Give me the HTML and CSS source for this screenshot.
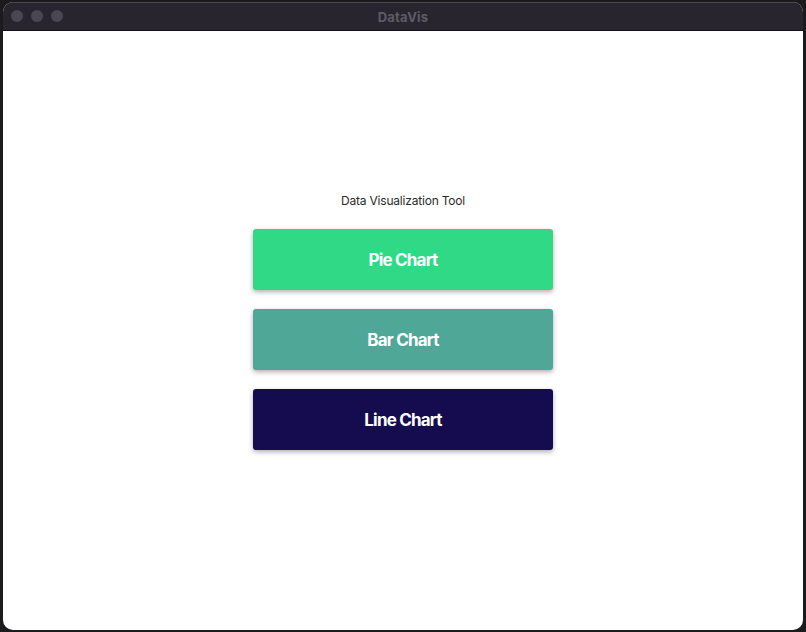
FILE: index.html
```html
<!DOCTYPE html>
<html>
<head>
<meta charset="utf-8">
<title>DataVis</title>
<link rel="stylesheet" href="styles.css">
</head>
<body>
<div class="window">
  <div class="titlebar">
    <div class="lights">
      <span class="light"></span>
      <span class="light"></span>
      <span class="light"></span>
    </div>
    <div class="title">DataVis</div>
  </div>
  <div class="content">
    <div class="panel">
      <div class="heading">Data Visualization Tool</div>
      <button class="btn btn-pie">Pie Chart</button>
      <button class="btn btn-bar">Bar Chart</button>
      <button class="btn btn-line">Line Chart</button>
    </div>
  </div>
</div>
</body>
</html>
```
FILE: styles.css
```css
* { box-sizing: border-box; }
html, body { margin: 0; padding: 0; }
body {
  width: 806px;
  height: 632px;
  background: #1b1b1d;
  padding: 2px 3px 2px 3px;
  font-family: Inter, "Noto Sans", sans-serif;
  overflow: hidden;
}
.window {
  width: 800px;
  height: 628px;
  border-radius: 10px;
  overflow: hidden;
  display: flex;
  flex-direction: column;
  background: #ffffff;
}
.titlebar {
  height: 29px;
  flex: none;
  background: #28252f;
  border-top: 1px solid #4a4750;
  border-bottom: 1px solid #111;
  position: relative;
  display: flex;
  align-items: center;
  justify-content: center;
}
.lights {
  position: absolute;
  left: 8px;
  top: 7px;
  display: flex;
  gap: 8px;
}
.light {
  width: 12px;
  height: 12px;
  border-radius: 50%;
  background: #4a4752;
}
.title {
  color: #5e5b66;
  font-weight: 700;
  font-size: 13px;
  letter-spacing: 0.2px;
}
.content {
  flex: 1;
  display: flex;
  justify-content: center;
  padding-top: 162px;
}
.panel {
  width: 300px;
  display: flex;
  flex-direction: column;
  align-items: stretch;
}
.heading {
  text-align: center;
  font-size: 12px;
  letter-spacing: -0.2px;
  color: #2b2b2b;
  line-height: 16px;
  margin-bottom: 20px;
}
.btn {
  height: 61px;
  border: none;
  border-radius: 3px;
  color: #ffffff;
  font-family: Inter, "Noto Sans", sans-serif;
  font-weight: 700;
  font-size: 17px;
  letter-spacing: -0.8px;
  box-shadow: 0 2px 5px rgba(0,0,0,0.32);
  margin-bottom: 19px;
  cursor: pointer;
}
.btn-pie { background: #2fd985; }
.btn-bar { background: #4ea797; }
.btn-line { background: #140c4e; }
```
